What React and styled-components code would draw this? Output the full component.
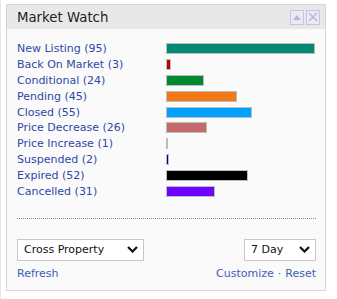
import React from 'react';
import styled, { createGlobalStyle } from 'styled-components';

const GlobalStyle = createGlobalStyle`
  html, body {
    margin: 0;
    padding: 0;
    background: #ffffff;
    font-family: "DejaVu Sans", Verdana, sans-serif;
  }
`;

const Page = styled.div`
  width: 337px;
  height: 299px;
  box-sizing: border-box;
  padding: 4px 0 0 5px;
  border-left: 1px solid #e6e6e6;
`;

const Panel = styled.div`
  width: 320px;
  height: 287px;
  box-sizing: border-box;
  border: 1px solid #d6d6d6;
  background: #fafafa;
  display: flex;
  flex-direction: column;
`;

const Header = styled.div`
  height: 24px;
  background: #e8e8e8;
  display: flex;
  align-items: center;
  justify-content: space-between;
  padding: 0 5px 0 10px;
`;

const Title = styled.div`
  font-size: 13.3px;
  color: #222;
`;

const Tools = styled.div`
  display: flex;
  gap: 2px;
`;

const ToolButton = styled.div`
  width: 12px;
  height: 13px;
  border: 1px solid #c4c4e4;
  background: #eaeaf4;
  display: flex;
  align-items: center;
  justify-content: center;
`;

const Body = styled.div`
  flex: 1;
  padding: 12px 9px 0 10px;
  display: flex;
  flex-direction: column;
`;

const List = styled.div`
  display: flex;
  flex-direction: column;
`;

const Row = styled.div`
  display: flex;
  align-items: center;
  height: 15.8px;
`;

const Label = styled.a`
  width: 149px;
  font-size: 11px;
  color: #2f47a6;
  text-decoration: none;
  white-space: nowrap;
`;

const Bar = styled.div`
  height: 11px;
  box-sizing: border-box;
  border: 1px solid #bdbdbd;
  background: ${(p) => p.color};
`;

const Divider = styled.div`
  margin-top: 19px;
  border-top: 1px dotted #8a8a8a;
`;

const Controls = styled.div`
  margin-top: 20px;
  display: flex;
  justify-content: space-between;
`;

const Dropdown = styled.div`
  width: ${(p) => p.width}px;
  height: 22px;
  box-sizing: border-box;
  border: 1px solid #c8c8c8;
  background: #fff;
  display: flex;
  align-items: center;
  justify-content: space-between;
  padding: 0 5px 0 6px;
  font-size: 11px;
  color: #111;
`;

const Links = styled.div`
  margin-top: 6px;
  display: flex;
  justify-content: space-between;
  font-size: 11px;
`;

const Link = styled.a`
  color: #3a5fb5;
  text-decoration: none;
`;

const Sep = styled.span`
  color: #3a5fb5;
  margin: 0 4px;
`;

const Chevron = () => (
  <svg width="11" height="7" viewBox="0 0 11 7">
    <path d="M1 1 L5.5 5.5 L10 1" fill="none" stroke="#111" strokeWidth="2.2" />
  </svg>
);

const rows = [
  { name: 'New Listing', count: 95, color: '#008a72' },
  { name: 'Back On Market', count: 3, color: '#c00000' },
  { name: 'Conditional', count: 24, color: '#008a30' },
  { name: 'Pending', count: 45, color: '#f27818' },
  { name: 'Closed', count: 55, color: '#00a2ff' },
  { name: 'Price Decrease', count: 26, color: '#c46a6a' },
  { name: 'Price Increase', count: 1, color: '#bdbdbd' },
  { name: 'Suspended', count: 2, color: '#00008a' },
  { name: 'Expired', count: 52, color: '#000000' },
  { name: 'Cancelled', count: 31, color: '#7000ff' },
];

const App = () => (
  <Page>
    <GlobalStyle />
    <Panel>
      <Header>
        <Title>Market Watch</Title>
        <Tools>
          <ToolButton>
            <svg width="8" height="5" viewBox="0 0 8 5">
              <path d="M0 5 L4 0 L8 5 Z" fill="#b8b8dc" />
            </svg>
          </ToolButton>
          <ToolButton>
            <svg width="10" height="10" viewBox="0 0 10 10">
              <path d="M1 1 L9 9 M9 1 L1 9" stroke="#b8b8dc" strokeWidth="1.6" />
            </svg>
          </ToolButton>
        </Tools>
      </Header>
      <Body>
        <List>
          {rows.map((r) => (
            <Row key={r.name}>
              <Label>
                {r.name} ({r.count})
              </Label>
              <Bar color={r.color} style={{ width: Math.max(2, Math.round((r.count / 95) * 149)) }} />
            </Row>
          ))}
        </List>
        <Divider />
        <Controls>
          <Dropdown width={127}>
            Cross Property
            <Chevron />
          </Dropdown>
          <Dropdown width={72}>
            7 Day
            <Chevron />
          </Dropdown>
        </Controls>
        <Links>
          <Link>Refresh</Link>
          <span>
            <Link>Customize</Link>
            <Sep>·</Sep>
            <Link>Reset</Link>
          </span>
        </Links>
      </Body>
    </Panel>
  </Page>
);

export default App;
